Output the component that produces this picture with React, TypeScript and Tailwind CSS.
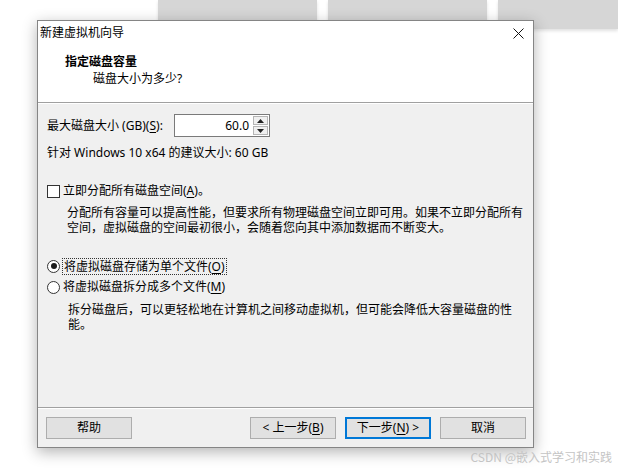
import type { ReactNode } from 'react'

function Key({ k }: { k: string }) {
  return <span className="underline underline-offset-[2px] decoration-1">{k}</span>
}

function Btn({ children, primary }: { children: ReactNode; primary?: boolean }) {
  return (
    <div
      className={`w-[86px] h-[22px] flex items-center justify-center bg-[#e1e1e1] text-[12px] text-black ${
        primary ? 'border-2 border-[#0078d7]' : 'border border-[#adadad]'
      }`}
    >
      {children}
    </div>
  )
}

function Radio({ checked }: { checked?: boolean }) {
  return (
    <div className="w-[13px] h-[13px] rounded-full border border-[#333] bg-white flex items-center justify-center shrink-0">
      {checked && <div className="w-[6px] h-[6px] rounded-full bg-[#1a1a1a]" />}
    </div>
  )
}

export default function App() {
  return (
    <div className="relative w-[618px] h-[469px] bg-white overflow-hidden font-['Noto_Sans','Noto_Sans_CJK_SC',sans-serif] text-black">
      {/* background tiles */}
      <div className="flex gap-[11px] pl-[158px] h-[29px]">
        <div className="w-[159px] bg-[#d6d6d6] shadow-[0_2px_3px_rgba(0,0,0,0.12)]" />
        <div className="w-[159px] bg-[#d6d6d6] shadow-[0_2px_3px_rgba(0,0,0,0.12)]" />
        <div className="flex-1 bg-[#d6d6d6] shadow-[0_2px_3px_rgba(0,0,0,0.12)]" />
      </div>

      {/* dialog window */}
      <div className="absolute left-[37px] top-[20px] w-[497px] h-[428px] border border-[#858585] bg-[#f0f0f0] flex flex-col shadow-[0_4px_14px_rgba(0,0,0,0.3)]">
        {/* header */}
        <div className="bg-white h-[81px] flex flex-col">
          <div className="h-[24px] flex items-center justify-between pl-[2px] pr-[10px]">
            <span className="text-[12px] leading-[16px]">新建虚拟机向导</span>
            <svg width="11" height="11" viewBox="0 0 11 11" className="mr-[-1px]">
              <path d="M0.5 0.5 L10.5 10.5 M10.5 0.5 L0.5 10.5" stroke="#111" strokeWidth="1" fill="none" />
            </svg>
          </div>
          <div className="pl-[27px] mt-[8px] text-[12px] font-bold leading-[17px]">指定磁盘容量</div>
          <div className="pl-[55px] text-[12px] leading-[17px]">磁盘大小为多少?</div>
        </div>
        <div className="border-t border-[#a0a0a0]" />
        <div className="border-t border-white" />

        {/* body */}
        <div className="flex flex-col pl-[9px] text-[12px]">
          <div className="flex items-center h-[23px] mt-[10px]">
            <span className="w-[127px] leading-[16px] whitespace-nowrap">
              最大磁盘大小&nbsp;(GB)(<Key k="S" />):
            </span>
            <div className="flex h-[23px] w-[96px] border border-[#7a7a7a] bg-white">
              <div className="flex-1 flex items-center justify-end pr-[4px] leading-[16px]">60.0</div>
              <div className="w-[16px] flex flex-col gap-[1px] p-[1px] pl-0">
                <div className="flex-1 flex items-center justify-center bg-[#f0f0f0] border border-[#b5b5b5]">
                  <svg width="7" height="4" viewBox="0 0 7 4">
                    <path d="M3.5 0 L7 4 L0 4 Z" fill="#222" />
                  </svg>
                </div>
                <div className="flex-1 flex items-center justify-center bg-[#f0f0f0] border border-[#b5b5b5]">
                  <svg width="7" height="4" viewBox="0 0 7 4">
                    <path d="M0 0 L7 0 L3.5 4 Z" fill="#222" />
                  </svg>
                </div>
              </div>
            </div>
          </div>

          <div className="mt-[8px] leading-[16px] whitespace-nowrap">针对 Windows 10 x64 的建议大小: 60 GB</div>

          <div className="mt-[22px] flex items-center gap-[3px] h-[16px]">
            <div className="w-[13px] h-[13px] border border-[#333] bg-white shrink-0" />
            <span className="leading-[16px] whitespace-nowrap">
              立即分配所有磁盘空间(<Key k="A" />)。
            </span>
          </div>

          <div className="mt-[6px] pl-[20px] leading-[15px] whitespace-nowrap">
            <div>分配所有容量可以提高性能，但要求所有物理磁盘空间立即可用。如果不立即分配所有</div>
            <div>空间，虚拟磁盘的空间最初很小，会随着您向其中添加数据而不断变大。</div>
          </div>

          <div className="mt-[23px] flex items-center gap-[2px] h-[16px]">
            <Radio checked />
            <span className="leading-[15px] px-[1px] border border-dotted border-[#333] whitespace-nowrap">
              将虚拟磁盘存储为单个文件(<Key k="O" />)
            </span>
          </div>

          <div className="mt-[5px] flex items-center gap-[3px] h-[16px]">
            <Radio />
            <span className="leading-[16px] whitespace-nowrap">
              将虚拟磁盘拆分成多个文件(<Key k="M" />)
            </span>
          </div>

          <div className="mt-[7px] pl-[21px] leading-[15px] whitespace-nowrap">
            <div>拆分磁盘后，可以更轻松地在计算机之间移动虚拟机，但可能会降低大容量磁盘的性</div>
            <div>能。</div>
          </div>
        </div>

        {/* footer */}
        <div className="mt-auto">
          <div className="border-t border-[#a0a0a0]" />
          <div className="border-t border-white" />
          <div className="flex justify-between pl-[8px] pr-[7px] pt-[8px] pb-[8px]">
            <Btn>帮助</Btn>
            <div className="flex gap-[9px]">
              <Btn>
                &lt; 上一步(<Key k="B" />)
              </Btn>
              <Btn primary>
                下一步(<Key k="N" />) &gt;
              </Btn>
              <Btn>取消</Btn>
            </div>
          </div>
        </div>
      </div>

      {/* watermark */}
      <div className="absolute right-[6px] bottom-[4px] text-[12px] leading-[16px] text-[#c4c4c4] font-['Noto_Sans_CJK_SC',sans-serif] whitespace-nowrap">
        CSDN @嵌入式学习和实践
      </div>
    </div>
  )
}
